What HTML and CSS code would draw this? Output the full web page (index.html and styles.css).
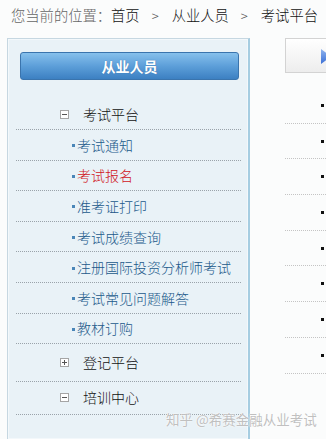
FILE: index.html
```html
<!DOCTYPE html>
<html lang="zh-CN">
<head>
<meta charset="utf-8">
<title>考试平台</title>
<link rel="stylesheet" href="styles.css">
</head>
<body>
<div class="crumb"><span class="crumb-label">您当前的位置：</span>首页<span class="sep">&gt;</span>从业人员<span class="sep">&gt;</span>考试平台</div>
<div class="main">
  <div class="sidebar">
    <div class="side-btn">从业人员</div>
    <ul class="menu">
      <li class="head head-first"><span class="ico ico-minus"></span>考试平台</li>
      <li class="sub"><span class="dot"></span>考试通知</li>
      <li class="sub sub-active"><span class="dot"></span>考试报名</li>
      <li class="sub"><span class="dot"></span>准考证打印</li>
      <li class="sub"><span class="dot"></span>考试成绩查询</li>
      <li class="sub"><span class="dot"></span>注册国际投资分析师考试</li>
      <li class="sub"><span class="dot"></span>考试常见问题解答</li>
      <li class="sub"><span class="dot"></span>教材订购</li>
      <li class="head head-mid"><span class="ico ico-plus"></span>登记平台</li>
      <li class="head head-last"><span class="ico ico-minus"></span>培训中心</li>
    </ul>
  </div>
  <div class="content">
    <div class="content-head">
      <svg class="tri" width="10" height="15" viewBox="0 0 10 15"><defs><linearGradient id="g" x1="0" y1="0" x2="0" y2="1"><stop offset="0" stop-color="#8fb4ee"/><stop offset="1" stop-color="#3b6fd6"/></linearGradient></defs><path d="M0 0 L10 7.5 L0 15 Z" fill="url(#g)"/></svg>
    </div>
    <ul class="news">
      <li><span class="ndot"></span></li>
      <li><span class="ndot"></span></li>
      <li><span class="ndot"></span></li>
      <li><span class="ndot"></span></li>
      <li><span class="ndot"></span></li>
      <li><span class="ndot"></span></li>
      <li><span class="ndot"></span></li>
      <li><span class="ndot"></span></li>
    </ul>
  </div>
</div>
<div class="watermark">知乎 @希赛金融从业考试</div>
</body>
</html>
```

FILE: styles.css
```css
html, body {
  margin: 0;
  padding: 0;
}
body {
  width: 326px;
  height: 439px;
  overflow: hidden;
  position: relative;
  background: #fbfcfc;
  font-family: "Noto Sans CJK SC", "Noto Sans", sans-serif;
  font-size: 14px;
  font-weight: 300;
  color: #333;
}
ul {
  list-style: none;
  margin: 0;
  padding: 0;
}
.crumb {
  height: 30px;
  line-height: 30px;
  padding-left: 11px;
  white-space: nowrap;
  color: #111;
  font-size: 14.3px;
}
.crumb-label {
  color: #666;
}
.sep {
  margin: 0 13px 0 12px;
  color: #555;
  font-size: 13px;
}
.main {
  display: flex;
  padding: 8px 0 0 7px;
  gap: 35px;
}
.sidebar {
  width: 240px;
  height: 400px;
  flex: none;
  background: #e9f2f7;
  border: 1px solid #c6d7e1;
  border-right: 2px solid #a6cde1;
  box-shadow: inset 0 0 0 1px #f3f8fb;
}
.side-btn {
  box-sizing: border-box;
  height: 28px;
  margin: 13px 9px 0 12px;
  border: 1px solid #3a74ad;
  border-radius: 3px;
  background: linear-gradient(#86c0ec, #5d9fd9 50%, #3c80c2);
  color: #fff;
  font-weight: bold;
  text-align: center;
  line-height: 26px;
  font-size: 14px;
  text-shadow: 0 0 1px #2f6aa6;
}
.menu {
  margin: 15px 7px 0 8px;
}
.menu li {
  border-bottom: 1px dotted #9aa3aa;
  white-space: nowrap;
}
.head {
  display: flex;
  align-items: center;
  height: 30px;
  padding-left: 44px;
  color: #111;
}
.head-first { padding-top: 4px; }
.head-mid { padding-top: 3px; padding-bottom: 4px; }
.head-last { padding-top: 0; padding-bottom: 2px; }
.ico {
  box-sizing: border-box;
  width: 9px;
  height: 9px;
  border: 1px solid #a5a5a5;
  background: #fff;
  margin-right: 14px;
  position: relative;
}
.ico::before {
  content: "";
  position: absolute;
  left: 1px;
  top: 3px;
  width: 5px;
  height: 1px;
  background: #555;
}
.ico-plus::after {
  content: "";
  position: absolute;
  left: 3px;
  top: 1px;
  width: 1px;
  height: 5px;
  background: #555;
}
.sub {
  display: flex;
  align-items: center;
  height: 29.6px;
  padding-left: 56px;
  color: #21598a;
}
.sub-active {
  color: #d0141b;
}
.dot {
  width: 3px;
  height: 3px;
  background: #4a86b8;
  margin-right: 2px;
  margin-top: 2px;
}
.content {
  flex: 1;
  min-width: 0;
}
.content-head {
  box-sizing: border-box;
  height: 35px;
  border: 1px solid #d3d3d3;
  border-right: none;
  background: linear-gradient(#ffffff, #ededed);
  padding: 10px 0 0 35px;
}
.tri {
  display: block;
}
.news {
  margin-top: 15px;
}
.news li {
  height: 34.7px;
  border-bottom: 1px dotted #c4c4c4;
  display: flex;
  align-items: center;
  padding-left: 36px;
}
.ndot {
  width: 3px;
  height: 3px;
  background: #111;
}
.watermark {
  position: absolute;
  left: 166px;
  top: 409px;
  line-height: 20px;
  font-size: 13.5px;
  font-weight: 400;
  color: rgba(175, 175, 175, 0.8);
  text-shadow: 0 0 2px #fff, 0 0 1px #fff;
  white-space: nowrap;
}
```
